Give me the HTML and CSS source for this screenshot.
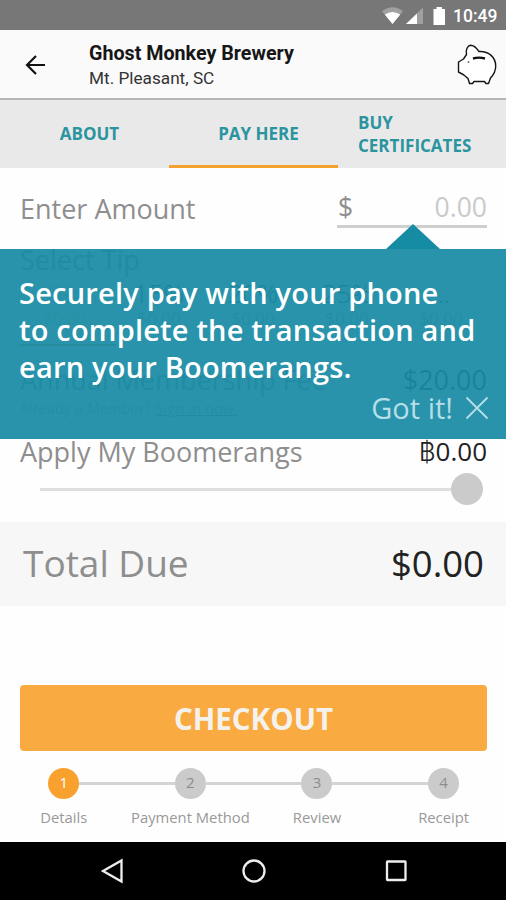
FILE: index.html
```html
<!DOCTYPE html>
<html lang="en">
<head>
    <meta charset="UTF-8">
    <meta name="viewport" content="width=device-width, initial-scale=1.0">
    <title>Ghost Monkey Brewery</title>
    <link rel="stylesheet" href="styles.css">
</head>
<body>
    <!-- Status bar -->
    <div class="status-bar">
        <svg width="70" height="20" viewBox="0 0 70 20">
            <path d="M0 5.2 Q10.500 -2.500 21 5.200 L10.500 18 Z" fill="#a0a0a0"/>
            <path d="M2.800 8.600 Q10.500 3.200 18.200 8.600 L10.500 18 Z" fill="#fff"/>
            <path d="M41 1.500 V18 H24 Z" fill="#a0a0a0"/>
            <path d="M35 7.500 V18 H24 Z" fill="#fff"/>
            <path d="M51.500 3 H54.500 V1 H60 V3 H63 V19 H51.500 Z" fill="#fff"/>
        </svg>
        <span class="clock">10:49</span>
    </div>

    <!-- Header -->
    <header class="header">
        <svg class="back" width="22" height="20" viewBox="0 0 22 20">
            <path d="M20 10 H2 M11 1 L2 10 L11 19" fill="none" stroke="#111" stroke-width="2.200"/>
        </svg>
        <div class="place">
            <h1>Ghost Monkey Brewery</h1>
            <p>Mt. Pleasant, SC</p>
        </div>
        <svg class="piggy" width="40" height="41" viewBox="0 0 40 41">
            <path d="M9.500 10.500 C8.500 6 10.500 1.500 13.500 1.300 C17.500 1.300 19.500 4 22 7.500 C32 7 38.700 13.500 38.700 22 C38.700 28 36.500 31 33.500 34 L31.500 39.500 H29 L27.500 37.500 H17 L15.500 39.500 H12.500 L11 34.500 C8 31.500 6 30 1.500 28 V18 L6.500 15 Z" fill="#fff" stroke="#151515" stroke-width="1.400" stroke-linejoin="round"/>
            <path d="M16 14.500 Q22 12.800 28 14.500" fill="none" stroke="#111" stroke-width="2.400"/>
            <circle cx="11.500" cy="18" r="1" fill="#777"/>
        </svg>
    </header>

    <!-- Tabs -->
    <nav class="tabs">
        <a class="tab">ABOUT</a>
        <a class="tab active">PAY HERE</a>
        <a class="tab tab-left">BUY CERTIFICATES</a>
    </nav>

    <main class="content">
        <div class="row amount-row">
            <span class="label">Enter Amount</span>
            <div class="amount"><span>$</span><span class="placeholder">0.00</span></div>
        </div>

        <div class="covered">
            <div class="label tip-label">Select Tip</div>
            <div class="tips">
                <div class="tip tip-selected">0%<small>$0.00</small></div>
                <div class="tip">15%<small>$0.00</small></div>
                <div class="tip">20%<small>$0.00</small></div>
                <div class="tip">25%<small>$0.00</small></div>
                <div class="tip">...<small>$0.00</small></div>
            </div>
            <div class="tip-line"></div>
            <div class="row fee"><span class="label">Annual Membership Fee</span><span class="value">$20.00</span></div>
            <p class="member">Already a Member? <u>Sign in now.</u></p>

            <!-- Payment hint -->
            <div class="hint">
                <svg class="hint-arrow" width="54" height="25" viewBox="0 0 54 25">
                    <path d="M0 25 L27 0 L54 25 Z" fill="#168ba4"/>
                </svg>
                <p>Securely pay with your phone<br>to complete the transaction and<br>earn your Boomerangs.</p>
                <div class="got-it">
                    <span>Got it!</span>
                    <svg width="24" height="24" viewBox="0 0 24 24">
                        <path d="M1.500 1.500 L22.500 22.500 M22.500 1.500 L1.500 22.500" stroke="#b5dfe8" stroke-width="1.800"/>
                    </svg>
                </div>
            </div>
        </div>

        <div class="row boomerangs">
            <span class="label">Apply My Boomerangs</span>
            <span class="value"><span class="baht">฿</span>0.00</span>
        </div>
        <div class="slider"><div class="track"></div><div class="thumb"></div></div>

        <div class="row total">
            <span>Total Due</span>
            <span class="total-value">$0.00</span>
        </div>

        <button class="checkout">CHECKOUT</button>

        <div class="steps">
            <div class="step current"><div class="dot">1</div><span>Details</span></div>
            <div class="step"><div class="dot">2</div><span>Payment Method</span></div>
            <div class="step"><div class="dot">3</div><span>Review</span></div>
            <div class="step"><div class="dot">4</div><span>Receipt</span></div>
        </div>
    </main>

    <!-- Android navigation -->
    <footer class="android-nav">
        <svg width="24" height="26" viewBox="0 0 24 26"><path d="M21.500 2.500 V23.500 L3 13 Z"/></svg>
        <svg width="24" height="26" viewBox="0 0 24 26"><circle cx="12" cy="13" r="10.500"/></svg>
        <svg width="24" height="26" viewBox="0 0 24 26"><rect x="3" y="3.500" width="18.500" height="18.500" rx="0.500"/></svg>
    </footer>
</body>
</html>
```
FILE: styles.css
```css
* {
    box-sizing: border-box;
}

body {
    margin: 0;
    width: 506px;
    height: 900px;
    overflow: hidden;
    background-color: #fefefe;
    font-family: "Open Sans", "Noto Sans", sans-serif;
    color: #8e8e8e;
    display: flex;
    flex-direction: column;
}

h1, p {
    margin: 0;
}

svg {
    display: block;
}

/* Status bar and header */
.status-bar {
    height: 30px;
    background-color: #777;
    display: flex;
    align-items: center;
    justify-content: flex-end;
    gap: 1px;
    padding: 2px 9px 0 0;
}

.clock {
    width: 44px;
    font: 500 17.5px/22px Roboto, sans-serif;
    color: #fff;
    white-space: nowrap;
}

.header {
    height: 70px;
    background-color: #fafafa;
    border-bottom: 2px solid #b5b5b5;
    display: flex;
    align-items: center;
    padding: 1px 9px 0 25px;
}

.place {
    margin-left: 42px;
    padding-top: 2px;
    flex: 1;
    font-family: Roboto, sans-serif;
    color: #161616;
}

.place h1 {
    font-size: 19.7px;
    line-height: 26px;
    font-weight: 700;
}

.place p {
    font-size: 17.2px;
    line-height: 23px;
    color: #333;
}

/* Tabs */
.tabs {
    height: 68px;
    background-color: #e9e9e9;
    display: grid;
    grid-template-columns: 169px 169px 168px;
}

.tab {
    display: flex;
    align-items: center;
    justify-content: center;
    padding: 0 0 1px 10px;
    font-size: 17px;
    line-height: 23px;
    font-weight: 700;
    color: #2a949f;
}

.tab.active {
    border-bottom: 3px solid #f5a12f;
    padding-top: 2px;
    padding-bottom: 0;
}

.tab-left {
    justify-content: flex-start;
    padding-left: 20px;
}

/* Payment form */
.content {
    flex: 1;
}

.row {
    display: flex;
    justify-content: space-between;
    align-items: center;
    padding: 0 19px 0 20px;
}

.label {
    font-size: 27px;
    line-height: 36px;
    color: #8e8e8e;
}

.value {
    font-size: 26px;
    line-height: 36px;
    color: #222;
}

.baht {
    font-family: Inter, sans-serif;
    font-weight: 300;
}

.amount-row {
    height: 81px;
}

.amount {
    width: 150px;
    height: 41px;
    margin-top: -3px;
    border-bottom: 3px solid #cfcfcf;
    display: flex;
    justify-content: space-between;
    font-size: 26.5px;
    line-height: 41px;
    padding: 0 0 0 1px;
}

.placeholder {
    color: #cacaca;
}

.covered {
    position: relative;
    height: 190px;
    overflow: visible;
}

.tip-label {
    padding: 0 20px;
    height: 28px;
    line-height: 22px;
}

.tips {
    display: grid;
    grid-template-columns: repeat(5, 94px);
    padding-left: 18px;
    height: 67px;
}

.tip {
    text-align: center;
    font-size: 26px;
    line-height: 32px;
    font-weight: 300;
    color: #222;
}

.tip small {
    display: block;
    font-size: 17px;
    line-height: 20px;
    color: #888;
}

.tip-selected,
.tip-selected small {
    color: #cfc09a;
}

.tip-line {
    width: 96px;
    margin-left: 20px;
    border-top: 2px solid #c39a2b;
}

.fee {
    padding-top: 16px;
}

.fee .value {
    font-size: 27px;
}

.member {
    padding: 2px 20px 0;
    font-size: 14px;
    line-height: 18px;
    font-weight: 300;
    letter-spacing: 0.6px;
}

/* Payment hint */
.hint {
    position: absolute;
    inset: 0;
    background-color: rgba(24, 139, 165, 0.93);
    color: #fff;
    padding: 25px 17px 0 19px;
}

.hint-arrow {
    position: absolute;
    left: 386px;
    top: -25px;
}

.hint p {
    font-size: 29px;
    line-height: 37px;
    font-weight: 600;
    letter-spacing: 0.2px;
    white-space: nowrap;
}

.got-it {
    display: flex;
    align-items: center;
    justify-content: flex-end;
    gap: 12px;
    margin-top: 4px;
    font-size: 29px;
    line-height: 38px;
    color: #b5dfe8;
}

.boomerangs {
    height: 25px;
}

.slider {
    display: flex;
    align-items: center;
    height: 58px;
    padding: 0 23px 8px 40px;
}

.track {
    flex: 1;
    height: 3px;
    background-color: #dedede;
}

.thumb {
    width: 32px;
    height: 32px;
    border-radius: 50%;
    background-color: #cbcbcb;
}

.total {
    height: 84px;
    background-color: #f7f7f7;
    padding: 0 22px 3px 23px;
    font-size: 37px;
}

.total-value {
    font-size: 36.5px;
    color: #222;
}

.checkout {
    display: block;
    width: 467px;
    height: 66px;
    margin: 79px 0 0 20px;
    border: none;
    border-radius: 4px;
    background-color: #f9ab41;
    color: #f5f2ee;
    font: 700 29.5px "Open Sans", sans-serif;
}

/* Progress steps */
.steps {
    display: grid;
    grid-template-columns: repeat(4, 126.6px);
    margin: 17px 0 0 0.5px;
}

.step {
    position: relative;
    display: flex;
    flex-direction: column;
    align-items: center;
    font-size: 14.8px;
    line-height: 20px;
    color: #999;
}

/* connector to the next step */
.step:not(:last-child)::after {
    content: '';
    position: absolute;
    left: calc(50% + 15px);
    top: 14px;
    width: 97px;
    height: 3px;
    background-color: #d4d4d4;
}

.dot {
    width: 31px;
    height: 31px;
    margin-bottom: 8px;
    border-radius: 50%;
    background-color: #cbcbcb;
    color: #8d8d8d;
    font-size: 15px;
    line-height: 29px;
    text-align: center;
}

.step.current .dot {
    background-color: #f8a12e;
    color: #fff;
}

.android-nav {
    height: 58px;
    background-color: #000;
    display: flex;
    align-items: center;
    justify-content: center;
    gap: 118px;
    padding-left: 1px;
}

.android-nav svg {
    fill: none;
    stroke: #eee;
    stroke-width: 2.3;
}
```
